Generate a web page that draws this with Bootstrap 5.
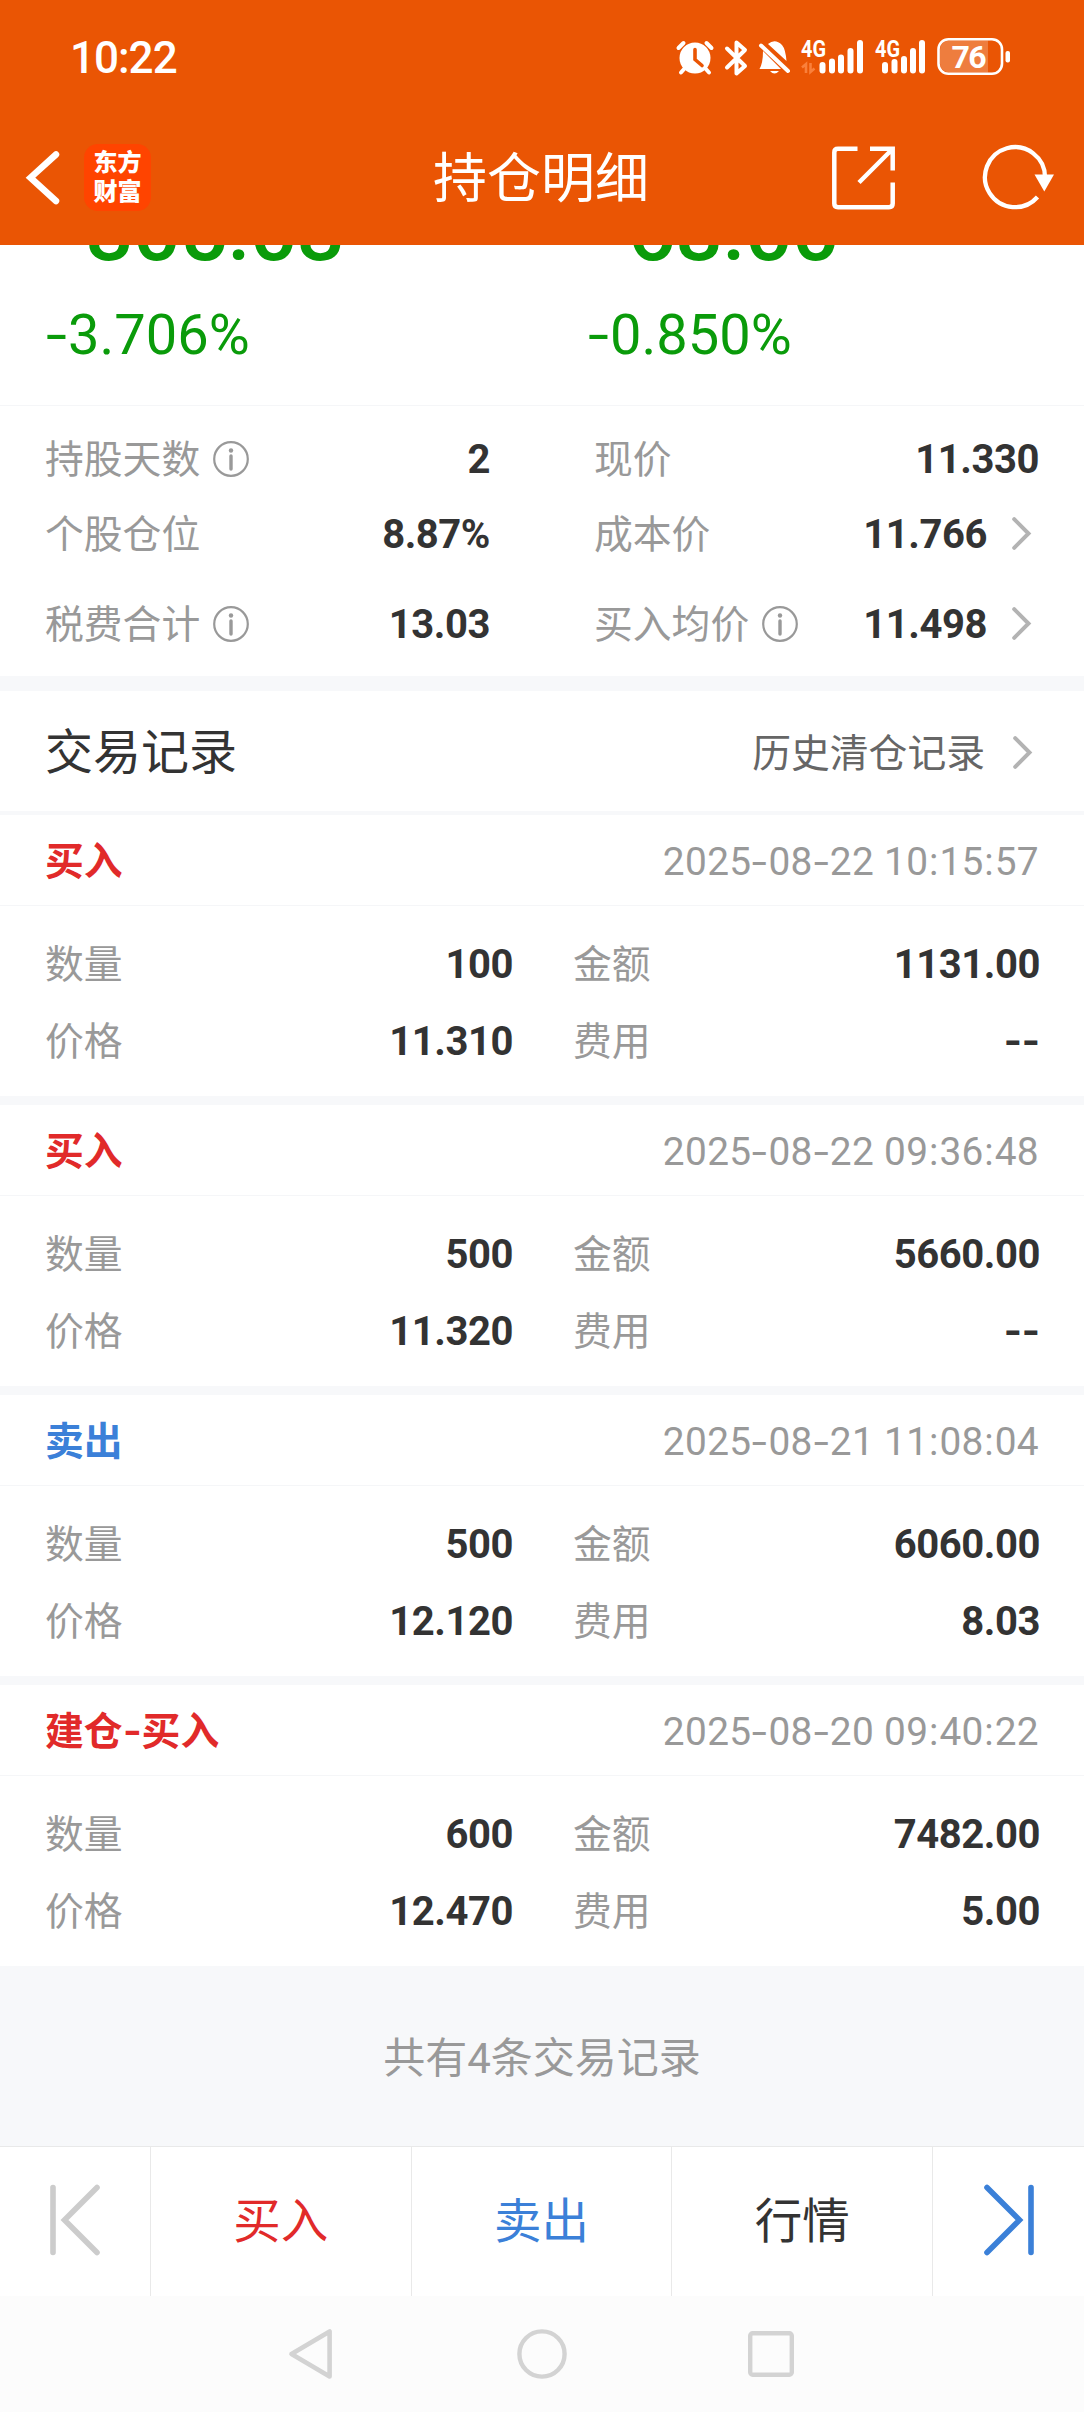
<!DOCTYPE html>
<html lang="zh-CN">
<head>
<meta charset="utf-8">
<meta name="viewport" content="width=device-width, initial-scale=1">
<title>持仓明细</title>
<link href="https://cdn.jsdelivr.net/npm/bootstrap@5.3.0/dist/css/bootstrap.min.css" rel="stylesheet">
<style>
  body{font-family:Roboto,"Noto Sans CJK SC",sans-serif;font-size:38.8px;line-height:1;color:#333;background:#fff;width:1084px;overflow-x:hidden}
  svg{display:block;flex:none;overflow:visible}
  .top-area{background:#ea5504;height:245px;color:#fff}
  .status-line{height:110px;padding:3px 73px 0 70px}
  .clock{font-size:44px;font-weight:500;letter-spacing:-1px;padding-top:2px}
  .title-line{height:135px;padding:0 29px 0 26px}
  .page-title{font-size:54px;line-height:60px;padding:4px 0 0 1px}
  .side{width:320px}
  .app-logo{width:67px;height:67px;border-radius:14px;background:#ff4400;font-size:24px;line-height:29px;font-weight:900;margin-left:24px}
  .pnl{height:160px;color:#0a9b0a}
  .pnl-col{width:542px;padding-left:46px}
  .pnl-big{font-size:84px;font-weight:500;height:29px;overflow:hidden;padding-left:12px;letter-spacing:-.6px}
  .pnl-big span{margin-top:-55px;line-height:84px}
  .pnl-pct{font-size:56px;margin-top:33px}
  .neg{display:inline-block;width:22px;transform:scaleX(1.35);transform-origin:0 50%}
  .hair{border-top:1px solid #f5f6f8}
  .facts{padding:15px 45px}
  .facts .pair,.deal-body .pair{height:75px}
  .facts .left{width:444px}
  .facts .right{width:444px;margin-left:105px}
  .extra{margin-top:15px}
  .lbl{color:#999;padding-top:3px}
  .val{font-weight:700;font-size:40px;letter-spacing:-.45px;padding-top:3px;margin-right:-1px}
  .info{margin-left:13px}
  .chev{margin-left:26px;margin-right:7px}
  .band{background:#f7f8fa}
  .sec-title{height:120px;padding:0 45px}
  .sec-title .name{font-size:48px;padding-top:3px}
  .more{color:#666}
  .more span{padding-top:3px;margin-right:2px}
  .deal{height:281px}
  .deal-head{height:90px;padding:4px 45px 0}
  .side-tag{font-weight:700}
  .side-tag i{display:inline-block;font-style:normal;width:19px;text-align:center;transform:scaleX(1.25)}
  .buy{color:#e12a2a}.sell{color:#3b80d8}
  .time{color:#999;letter-spacing:.35px}
  .time i{display:inline-block;font-style:normal;width:17px;transform:scaleX(1.4);text-align:center}
  .time b{display:inline-block;font-weight:400;width:11px;text-align:center}
  .deal-body{padding:19px 45px 0}
  .deal-body .pair{height:77px}
  .deal-body .left{width:467px}
  .deal-body .right{width:466px;margin-left:61px}
  .dash{display:inline-block;transform:scaleX(1.17);transform-origin:100% 50%}
  .total{height:180px;font-size:42px;color:#999;padding-top:6px}
  .tools{height:150px;border-top:1px solid #e9e9e9;font-size:47.5px}
  .tools>div{border-right:1px solid #e9e9e9}
  .tools>div:last-child{border-right:0}
  .tools span{padding-top:3px}
  .tool-end{width:151px;padding-bottom:3px}
  .tool-mid{width:261px}
  .sysnav{height:116px;background:#fcfcfc;padding-left:288px}
</style>
</head>
<body>
<header class="top-area">
  <div class="status-line d-flex align-items-center justify-content-between">
    <span class="clock">10:22</span>
    <div class="d-flex align-items-center" style="gap:10px">
      <svg width="38" height="38" viewBox="676 37 38 38"><circle cx="695" cy="57" r="15.5" fill="#fff"/><path d="M678.500 47l5-5M711.500 47l-5-5M685 67l-4 4.500M705 67l4 4.500" stroke="#fff" stroke-width="4" stroke-linecap="round"/><path d="M695 48.500v10l7 6" fill="none" stroke="#ea5504" stroke-width="3.600" stroke-linecap="round"/></svg>
      <svg width="24" height="38" viewBox="724 37 24 38"><path d="M727 47.500l18 17.500-8.500 7.500v-31l8.500 7.500L727 66.500" fill="none" stroke="#fff" stroke-width="4" stroke-linejoin="round" stroke-linecap="round"/></svg>
      <svg width="32" height="38" viewBox="758 37 32 38"><path d="M768 43q7-6 14 1 3.500 4 4.500 16zM763 50q0 12-3.500 18H781z" fill="#fff"/><path d="M770 70h9q-4.500 5-9 0" fill="#fff"/><path d="M761 44.500L788 70" stroke="#fff" stroke-width="4" stroke-linecap="round"/></svg>
      <svg width="64" height="38" viewBox="800 37 64 38"><text x="801" y="56" font-size="23" font-weight="700" textLength="25" lengthAdjust="spacingAndGlyphs" fill="#fff">4G</text><g fill="#fff"><rect x="819.500" y="61" width="6" height="11.500" rx="3"/><rect x="829" y="57.500" width="6" height="15" rx="3"/><rect x="838" y="53.500" width="6" height="19" rx="3"/><rect x="847.500" y="47" width="6" height="25.500" rx="3"/><rect x="857" y="39" width="6" height="33.500" rx="3"/></g><path d="M802 66.500l4-3.500v9M810.500 62v9l4-3.500" fill="none" stroke="#ff8f4d" stroke-width="2.600" opacity=".75"/></svg>
      <svg width="52" height="38" viewBox="874 37 52 38"><text x="875" y="56" font-size="23" font-weight="700" textLength="25" lengthAdjust="spacingAndGlyphs" fill="#fff">4G</text><g fill="#fff"><rect x="882" y="61" width="6" height="11.500" rx="3"/><rect x="891.500" y="58" width="6" height="14.500" rx="3"/><rect x="901" y="55" width="6" height="17.500" rx="3"/><rect x="910" y="47" width="6" height="25.500" rx="3"/><rect x="919" y="39" width="6" height="33.500" rx="3"/></g></svg>
      <svg width="75" height="40" viewBox="936 36 75 40"><path d="M988 39.500h-39a9 9 0 0 0-9 9v14a9 9 0 0 0 9 9h39z" fill="#ee7d3e"/><rect x="938.500" y="38.200" width="63.500" height="34.600" rx="10" fill="none" stroke="#fff" stroke-width="2.600"/><rect x="1005.500" y="50" width="4.500" height="11.500" rx="2" fill="#fff"/><text x="951.500" y="67" font-size="32" font-weight="700" fill="#fff" textLength="35">76</text></svg>
    </div>
  </div>
  <div class="title-line d-flex align-items-center justify-content-between">
    <div class="side d-flex align-items-center">
      <svg width="34" height="56" viewBox="26 150 34 56"><path d="M56 154.500L30.500 177.700 56 201" fill="none" stroke="#fff" stroke-width="6.500" stroke-linecap="round" stroke-linejoin="miter"/></svg>
      <div class="app-logo d-flex flex-column align-items-center justify-content-center"><span>东方</span><span>财富</span></div>
    </div>
    <div class="page-title">持仓明细</div>
    <div class="side d-flex align-items-center justify-content-end">
      <svg width="65" height="66" viewBox="831 144.500 65 66"><path d="M857.500 148.300H838q-3.700 0-3.700 3.700v51q0 3.700 3.700 3.700h51q3.700 0 3.700-3.700V182M870 148.300h22.700V170M892 149l-33 33" fill="none" stroke="#fff" stroke-width="4.500"/></svg>
      <svg style="margin-left:87px" width="72" height="66" viewBox="983 144.500 72 66"><path d="M1045 177A30 30 0 1 0 1037.500 196.500" fill="none" stroke="#fff" stroke-width="4.300"/><path d="M1034.500 174h19.500l-9.700 17z" fill="#fff"/></svg>
    </div>
  </div>
</header>

<main>
  <section class="pnl d-flex">
    <div class="pnl-col"><div class="pnl-big d-flex"><span>-305.03</span></div><div class="pnl-pct"><span class="neg">-</span>3.706%</div></div>
    <div class="pnl-col"><div class="pnl-big d-flex"><span>-68.00</span></div><div class="pnl-pct"><span class="neg">-</span>0.850%</div></div>
  </section>

  <section class="facts hair">
    <div class="d-flex">
      <div class="pair left d-flex align-items-center"><span class="lbl">持股天数</span><svg class="info" width="36" height="36" viewBox="0 0 36 36"><circle cx="18" cy="18" r="16.800" fill="none" stroke="#999" stroke-width="2.200"/><circle cx="18" cy="9.500" r="2.200" fill="#999"/><path d="M18 15v13" stroke="#999" stroke-width="3.400" stroke-linecap="round"/></svg><span class="val ms-auto">2</span></div>
      <div class="pair right d-flex align-items-center"><span class="lbl">现价</span><span class="val ms-auto">11.330</span></div>
    </div>
    <div class="d-flex">
      <div class="pair left d-flex align-items-center"><span class="lbl">个股仓位</span><span class="val ms-auto">8.87%</span></div>
      <div class="pair right d-flex align-items-center"><span class="lbl">成本价</span><span class="val ms-auto">11.766</span><svg class="chev" width="19" height="33" viewBox="0 0 19 33"><path d="M2.200 2.200L16.500 16.500 2.200 30.800" fill="none" stroke="#b3b3b3" stroke-width="4" stroke-linecap="round"/></svg></div>
    </div>
    <div class="d-flex extra">
      <div class="pair left d-flex align-items-center"><span class="lbl">税费合计</span><svg class="info" width="36" height="36" viewBox="0 0 36 36"><circle cx="18" cy="18" r="16.800" fill="none" stroke="#999" stroke-width="2.200"/><circle cx="18" cy="9.500" r="2.200" fill="#999"/><path d="M18 15v13" stroke="#999" stroke-width="3.400" stroke-linecap="round"/></svg><span class="val ms-auto">13.03</span></div>
      <div class="pair right d-flex align-items-center"><span class="lbl">买入均价</span><svg class="info" width="36" height="36" viewBox="0 0 36 36"><circle cx="18" cy="18" r="16.800" fill="none" stroke="#999" stroke-width="2.200"/><circle cx="18" cy="9.500" r="2.200" fill="#999"/><path d="M18 15v13" stroke="#999" stroke-width="3.400" stroke-linecap="round"/></svg><span class="val ms-auto">11.498</span><svg class="chev" width="19" height="33" viewBox="0 0 19 33"><path d="M2.200 2.200L16.500 16.500 2.200 30.800" fill="none" stroke="#b3b3b3" stroke-width="4" stroke-linecap="round"/></svg></div>
    </div>
  </section>

  <div class="band" style="height:15px"></div>
  <section class="sec-title d-flex align-items-center justify-content-between">
    <span class="name">交易记录</span>
    <a class="more d-flex align-items-center text-decoration-none pt-1"><span>历史清仓记录</span><svg class="chev" width="19" height="33" viewBox="0 0 19 33"><path d="M2.200 2.200L16.500 16.500 2.200 30.800" fill="none" stroke="#b3b3b3" stroke-width="4" stroke-linecap="round"/></svg></a>
  </section>
  <div class="band" style="height:4px"></div>

  <article class="deal">
    <div class="deal-head d-flex align-items-center justify-content-between"><span class="side-tag buy">买入</span><span class="time">2025<i>-</i>08<i>-</i>22 10<b>:</b>15<b>:</b>57</span></div>
    <div class="deal-body hair">
      <div class="d-flex"><div class="pair left d-flex align-items-center"><span class="lbl">数量</span><span class="val ms-auto">100</span></div><div class="pair right d-flex align-items-center"><span class="lbl">金额</span><span class="val ms-auto">1131.00</span></div></div>
      <div class="d-flex"><div class="pair left d-flex align-items-center"><span class="lbl">价格</span><span class="val ms-auto">11.310</span></div><div class="pair right d-flex align-items-center"><span class="lbl">费用</span><span class="val ms-auto"><span class="dash">--</span></span></div></div>
    </div>
  </article>
  <div class="band" style="height:9px"></div>
  <article class="deal">
    <div class="deal-head d-flex align-items-center justify-content-between"><span class="side-tag buy">买入</span><span class="time">2025<i>-</i>08<i>-</i>22 09<b>:</b>36<b>:</b>48</span></div>
    <div class="deal-body hair">
      <div class="d-flex"><div class="pair left d-flex align-items-center"><span class="lbl">数量</span><span class="val ms-auto">500</span></div><div class="pair right d-flex align-items-center"><span class="lbl">金额</span><span class="val ms-auto">5660.00</span></div></div>
      <div class="d-flex"><div class="pair left d-flex align-items-center"><span class="lbl">价格</span><span class="val ms-auto">11.320</span></div><div class="pair right d-flex align-items-center"><span class="lbl">费用</span><span class="val ms-auto"><span class="dash">--</span></span></div></div>
    </div>
  </article>
  <div class="band" style="height:9px"></div>
  <article class="deal">
    <div class="deal-head d-flex align-items-center justify-content-between"><span class="side-tag sell">卖出</span><span class="time">2025<i>-</i>08<i>-</i>21 11<b>:</b>08<b>:</b>04</span></div>
    <div class="deal-body hair">
      <div class="d-flex"><div class="pair left d-flex align-items-center"><span class="lbl">数量</span><span class="val ms-auto">500</span></div><div class="pair right d-flex align-items-center"><span class="lbl">金额</span><span class="val ms-auto">6060.00</span></div></div>
      <div class="d-flex"><div class="pair left d-flex align-items-center"><span class="lbl">价格</span><span class="val ms-auto">12.120</span></div><div class="pair right d-flex align-items-center"><span class="lbl">费用</span><span class="val ms-auto">8.03</span></div></div>
    </div>
  </article>
  <div class="band" style="height:9px"></div>
  <article class="deal">
    <div class="deal-head d-flex align-items-center justify-content-between"><span class="side-tag buy">建仓<i>-</i>买入</span><span class="time">2025<i>-</i>08<i>-</i>20 09<b>:</b>40<b>:</b>22</span></div>
    <div class="deal-body hair">
      <div class="d-flex"><div class="pair left d-flex align-items-center"><span class="lbl">数量</span><span class="val ms-auto">600</span></div><div class="pair right d-flex align-items-center"><span class="lbl">金额</span><span class="val ms-auto">7482.00</span></div></div>
      <div class="d-flex"><div class="pair left d-flex align-items-center"><span class="lbl">价格</span><span class="val ms-auto">12.470</span></div><div class="pair right d-flex align-items-center"><span class="lbl">费用</span><span class="val ms-auto">5.00</span></div></div>
    </div>
  </article>
  <div class="band total d-flex align-items-center justify-content-center">共有4条交易记录</div>
</main>

<footer>
  <div class="tools d-flex">
    <div class="tool-end d-flex align-items-center justify-content-center"><svg width="52" height="72" viewBox="0 0 52 72"><path d="M4 3.500v65M48 3.500L15.500 36 48 68.500" fill="none" stroke="#ccc" stroke-width="5.600" stroke-linecap="round"/></svg></div>
    <div class="tool-mid d-flex align-items-center justify-content-center buy"><span>买入</span></div>
    <div class="tool-mid d-flex align-items-center justify-content-center sell"><span>卖出</span></div>
    <div class="tool-mid d-flex align-items-center justify-content-center"><span>行情</span></div>
    <div class="tool-end d-flex align-items-center justify-content-center"><svg width="52" height="72" viewBox="0 0 52 72"><path d="M48 3.500v65M4 3.500L36.500 36 4 68.500" fill="none" stroke="#3b80d8" stroke-width="5.600" stroke-linecap="round"/></svg></div>
  </div>
  <div class="sysnav d-flex align-items-center">
    <svg width="46" height="52" viewBox="288 2328 46 52"><path d="M329.600 2331.500v45L291.500 2354z" fill="none" stroke="#d3d3d3" stroke-width="4.600" stroke-linejoin="round"/></svg>
    <svg style="margin-left:182px" width="52" height="52" viewBox="0 0 52 52"><circle cx="26" cy="26" r="22.600" fill="none" stroke="#d3d3d3" stroke-width="4.400"/></svg>
    <svg style="margin-left:179px" width="48" height="48" viewBox="0 0 48 48"><rect x="3.200" y="3.200" width="41.600" height="41.600" rx="2.500" fill="none" stroke="#d3d3d3" stroke-width="4.400"/></svg>
  </div>
</footer>
<script src="https://cdn.jsdelivr.net/npm/bootstrap@5.3.0/dist/js/bootstrap.bundle.min.js"></script>
</body>
</html>
